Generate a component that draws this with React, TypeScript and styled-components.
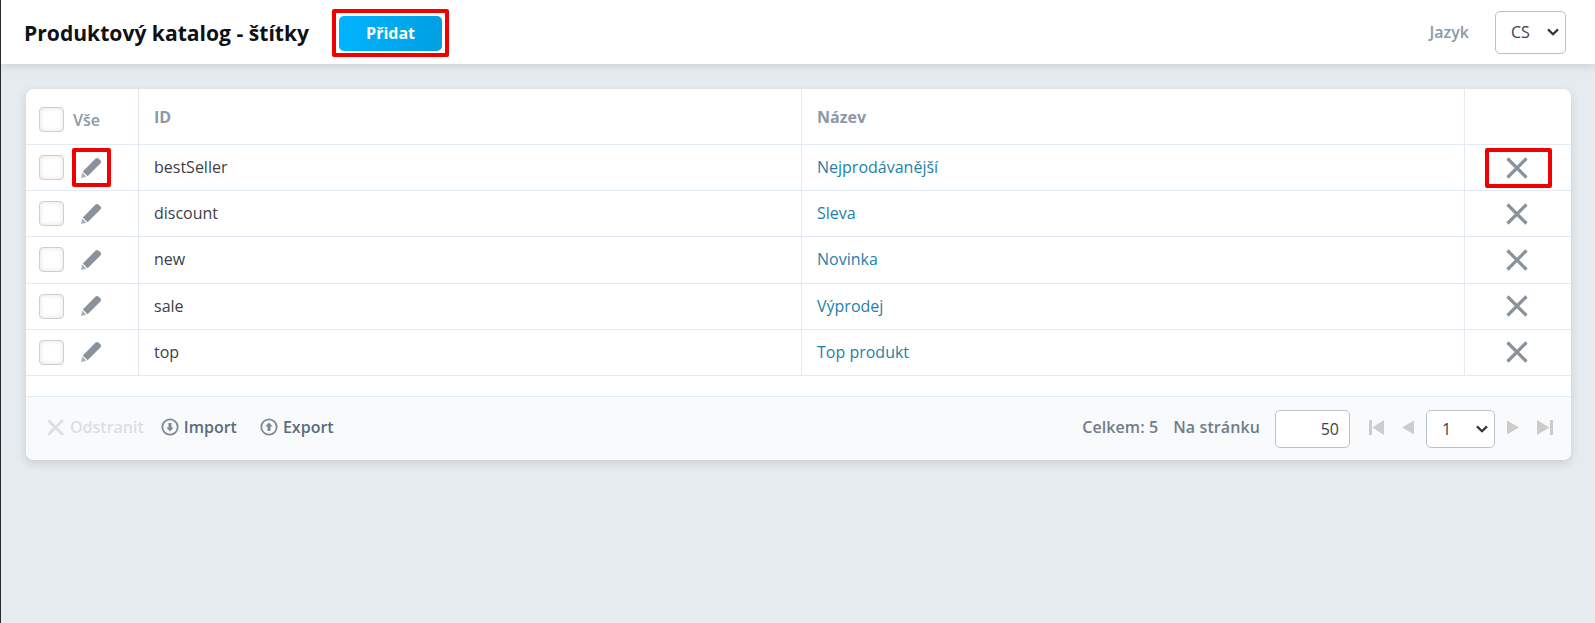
import React from 'react';
import styled, { createGlobalStyle } from 'styled-components';

const GlobalStyle = createGlobalStyle`
  html, body {
    margin: 0;
    padding: 0;
    height: 100%;
    background: #e6ebef;
    font-family: "Open Sans", "Noto Sans", sans-serif;
    font-size: 16px;
    color: #3d4148;
  }
`;

const chevron =
  "url(\"data:image/svg+xml,%3Csvg xmlns='http://www.w3.org/2000/svg' width='12' height='8' viewBox='0 0 12 8'%3E%3Cpath d='M1 1.4 6 6.2 11 1.4' fill='none' stroke='%23333' stroke-width='2.2'/%3E%3C/svg%3E\")";

const Page = styled.div`
  min-height: 623px;
  box-sizing: border-box;
  border-left: 1px solid #2a2a2a;
  background: #e6ebef;
`;

const TopBar = styled.header`
  display: flex;
  align-items: center;
  height: 64px;
  padding: 0 29px 0 23px;
  background: #fff;
  box-shadow: 0 2px 8px rgba(60, 70, 80, 0.18);
`;

const Title = styled.h1`
  margin: 0;
  font-size: 21.1px;
  line-height: 27px;
  font-weight: 700;
  color: #0e1116;
`;

const Marked = styled.span`
  display: inline-flex;
  flex: none;
  align-items: center;
  justify-content: center;
  box-sizing: border-box;
  border: 4px solid #f00000;
  border-radius: 2px;
`;

const AddMark = styled(Marked)`
  width: 117px;
  height: 48px;
  margin: 2px 0 0 23px;
`;

const AddButton = styled.button`
  width: 103px;
  height: 35px;
  padding: 0;
  border: 0;
  border-radius: 5px;
  background: linear-gradient(90deg, #00b4ff, #009fe0);
  color: #fff;
  font: 700 16px "Open Sans", sans-serif;
`;

const Language = styled.div`
  display: flex;
  align-items: center;
  margin-left: auto;
  gap: 26px;
`;

const MutedLabel = styled.span`
  color: #8a99a8;
  font-size: 16px;
  font-weight: 600;
`;

const Select = styled.select<{ $w: number; $h: number }>`
  width: ${(p) => p.$w}px;
  height: ${(p) => p.$h}px;
  box-sizing: border-box;
  padding: 0 0 0 15px;
  border: 1px solid #b9c1c9;
  border-radius: 5px;
  appearance: none;
  background: #fff ${chevron} no-repeat right 6px center;
  color: #3d4148;
  font: 400 16px "Open Sans", sans-serif;
`;

const PageSelect = styled(Select)`
  margin-top: 3px;
`;

const Content = styled.main`
  padding: 25px 24px 0 25px;
`;

const Card = styled.section`
  border-radius: 8px;
  background: #fff;
  box-shadow: 0 3px 8px rgba(60, 70, 80, 0.18);
  overflow: hidden;
`;

const Row = styled.div<{ $head?: boolean }>`
  display: grid;
  grid-template-columns: 112px 663px 663px 1fr;
  height: ${(p) => (p.$head ? 56 : 46.2)}px;
  box-sizing: border-box;
  border-bottom: 1px solid #e2ebf3;
`;

const Cell = styled.div`
  display: flex;
  align-items: center;
  padding: 0 0 1px 15px;
  border-left: 1px solid #e2ebf3;
`;

const HeadCell = styled(Cell)`
  padding-bottom: 0;
  color: #8a99a8;
  font-weight: 700;
`;

const SelectCell = styled.div<{ $head?: boolean }>`
  display: flex;
  align-items: center;
  padding: ${(p) => (p.$head ? '6px' : '0')} 0 0 13px;
  box-sizing: border-box;
`;

const Box = styled.span`
  flex: none;
  width: 25px;
  height: 25px;
  box-sizing: border-box;
  border: 1px solid #ccd0d4;
  border-radius: 4px;
  background: #fff;
  box-shadow: inset 0 0 5px rgba(0, 0, 0, 0.12);
`;

const AllLabel = styled.span`
  margin-left: 9px;
  color: #8a99a8;
  font-weight: 600;
`;

const PencilSlot = styled.span`
  display: flex;
  flex: none;
  align-items: center;
  justify-content: center;
  width: 39px;
  height: 39px;
  margin-left: 8px;
`;

const PencilMark = styled(Marked)`
  width: 39px;
  height: 39px;
  margin-left: 8px;
`;

const PencilIcon = styled.svg`
  margin-right: 2px;
  fill: #8a939c;
`;

const NameLink = styled.a`
  color: #1f7fa8;
`;

const RemoveCell = styled(Cell)`
  justify-content: center;
  padding: 0;
`;

const RemoveMark = styled(Marked)`
  width: 67px;
  height: 40px;
`;

const RemoveIcon = styled.svg<{ $shift?: boolean }>`
  flex: none;
  margin-right: ${(p) => (p.$shift ? 2 : 0)}px;
  fill: none;
`;

const Spacer = styled.div`
  height: 20px;
`;

const Footer = styled.footer`
  display: flex;
  align-items: center;
  box-sizing: border-box;
  height: 64px;
  padding: 0 18px 2px 21px;
  background: #f9fafc;
  border-top: 1px solid #e2ebf3;
`;

const Action = styled.span<{ $off?: boolean }>`
  display: inline-flex;
  align-items: center;
  gap: ${(p) => (p.$off ? 6 : 5)}px;
  margin-right: ${(p) => (p.$off ? 17 : 23)}px;
  color: ${(p) => (p.$off ? '#dcdfe2' : '#5c6b7a')};
  font-weight: 600;
`;

const Pager = styled.div`
  display: flex;
  align-items: center;
  margin-left: auto;
`;

const PagerText = styled.span`
  margin-right: 15px;
  color: #6f7d8a;
  font-weight: 600;
  letter-spacing: 0.1px;
`;

const PerPage = styled.input`
  width: 75px;
  height: 38px;
  margin-top: 3px;
  box-sizing: border-box;
  padding: 0 10px;
  border: 1px solid #b9c1c9;
  border-radius: 5px;
  background: #fff;
  color: #3d4148;
  text-align: right;
  font: 400 16px "Open Sans", sans-serif;
`;

const PagerIcon = styled.svg<{ $w: number; $l: number; $r: number }>`
  flex: none;
  width: ${(p) => p.$w}px;
  height: 15px;
  margin: 1px ${(p) => p.$r}px 0 ${(p) => p.$l}px;
  fill: #cccccc;
`;

const Pencil = () => (
  <PencilIcon width="22" height="22" viewBox="0 0 22 22">
    <path d="M15.6 1.6C16.6.7 17.6.7 18.4 1.4L20.6 3.6C21.3 4.4 21.3 5.4 20.4 6.4L7.6 19.2 2.8 14.4Z" />
    <path d="M2.2 15.6 6.4 19.8 1 21Z" fill="#a9b0b6" />
  </PencilIcon>
);

const Cross = ({
  size = 22,
  color = '#8a939c',
  weight = 3.2,
  shift,
}: {
  size?: number;
  color?: string;
  weight?: number;
  shift?: boolean;
}) => (
  <RemoveIcon $shift={shift} width={size} height={size} viewBox="0 0 22 22" stroke={color} strokeWidth={weight}>
    <path d="M1.5 1.5 20.5 20.5M20.5 1.5 1.5 20.5" />
  </RemoveIcon>
);

const CircleArrow = ({ up }: { up?: boolean }) => (
  <svg width="18" height="18" viewBox="0 0 18 18">
    <circle cx="9" cy="9" r="7.7" fill="none" stroke="#7d8994" strokeWidth="1.8" />
    <path d={up ? 'M9 4.5 12.6 8.6H10.5V13H7.5V8.6H5.4Z' : 'M9 13.5 12.6 9.4H10.5V5H7.5V9.4H5.4Z'} fill="#7d8994" />
  </svg>
);

const rows = [
  { id: 'bestSeller', name: 'Nejprodávanější', marked: true },
  { id: 'discount', name: 'Sleva' },
  { id: 'new', name: 'Novinka' },
  { id: 'sale', name: 'Výprodej' },
  { id: 'top', name: 'Top produkt' },
];

export default function App() {
  return (
    <Page>
      <GlobalStyle />
      <TopBar>
        <Title>Produktový katalog - štítky</Title>
        <AddMark>
          <AddButton>Přidat</AddButton>
        </AddMark>
        <Language>
          <MutedLabel>Jazyk</MutedLabel>
          <Select $w={71} $h={43} defaultValue="CS">
            <option>CS</option>
            <option>EN</option>
          </Select>
        </Language>
      </TopBar>
      <Content>
        <Card>
          <Row $head>
            <SelectCell $head>
              <Box />
              <AllLabel>Vše</AllLabel>
            </SelectCell>
            <HeadCell>ID</HeadCell>
            <HeadCell>Název</HeadCell>
            <HeadCell />
          </Row>
          {rows.map((row) => (
            <Row key={row.id}>
              <SelectCell>
                <Box />
                {row.marked ? (
                  <PencilMark>
                    <Pencil />
                  </PencilMark>
                ) : (
                  <PencilSlot>
                    <Pencil />
                  </PencilSlot>
                )}
              </SelectCell>
              <Cell>{row.id}</Cell>
              <Cell>
                <NameLink>{row.name}</NameLink>
              </Cell>
              <RemoveCell>
                {row.marked ? (
                  <RemoveMark>
                    <Cross shift />
                  </RemoveMark>
                ) : (
                  <Cross shift />
                )}
              </RemoveCell>
            </Row>
          ))}
          <Spacer />
          <Footer>
            <Action $off>
              <Cross size={17} color="#dcdfe2" weight={3.6} />
              Odstranit
            </Action>
            <Action>
              <CircleArrow />
              Import
            </Action>
            <Action>
              <CircleArrow up />
              Export
            </Action>
            <Pager>
              <PagerText>Celkem: 5</PagerText>
              <PagerText>Na stránku</PagerText>
              <PerPage defaultValue="50" />
              <PagerIcon $w={15} $l={19} $r={18} viewBox="0 0 15 15">
                <path d="M0 0H3V15H0ZM15 0V15L3.5 7.5Z" />
              </PagerIcon>
              <PagerIcon $w={12} $l={0} $r={12} viewBox="0 0 12 15">
                <path d="M12 .5V14.5L0 7.5Z" />
              </PagerIcon>
              <PageSelect $w={69} $h={38} defaultValue="1">
                <option>1</option>
              </PageSelect>
              <PagerIcon $w={12} $l={12} $r={18} viewBox="0 0 12 15">
                <path d="M0 .5V14.5L12 7.5Z" />
              </PagerIcon>
              <PagerIcon $w={16} $l={0} $r={0} viewBox="0 0 16 15">
                <path d="M16 0H13V15H16ZM0 0V15L12.5 7.5Z" />
              </PagerIcon>
            </Pager>
          </Footer>
        </Card>
      </Content>
    </Page>
  );
}
